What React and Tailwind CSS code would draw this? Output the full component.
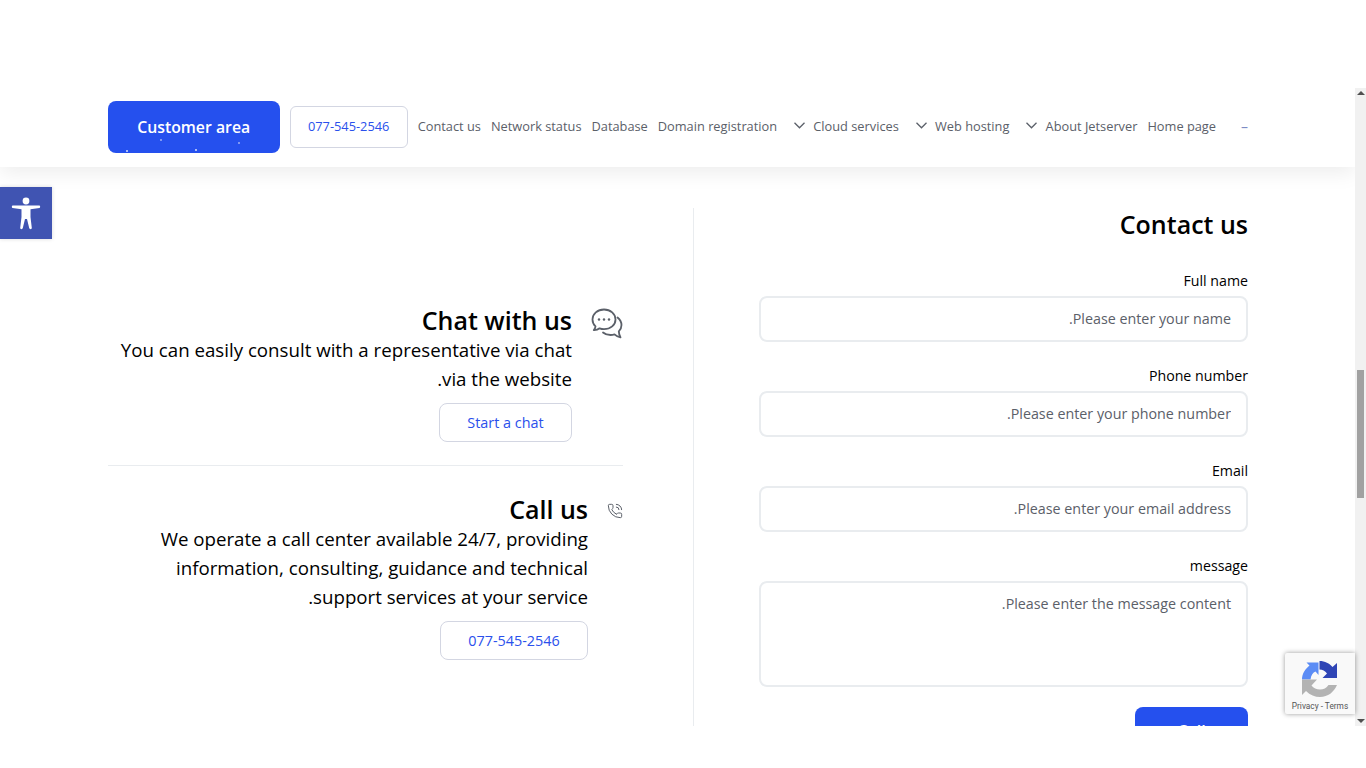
const navItems = [
  { label: "Home page" },
  { label: "About Jetserver", arrow: true },
  { label: "Web hosting", arrow: true },
  { label: "Cloud services", arrow: true },
  { label: "Domain registration" },
  { label: "Database" },
  { label: "Network status" },
  { label: "Contact us" },
];

const fields = [
  { label: "Full name", placeholder: "Please enter your name." },
  { label: "Phone number", placeholder: "Please enter your phone number." },
  { label: "Email", placeholder: "Please enter your email address." },
];

function ChatIcon() {
  return (
    <svg width="32" height="32" viewBox="0 0 32 32" fill="none" stroke="#5b6069" strokeWidth="1.8" strokeLinecap="round" strokeLinejoin="round">
      <path d="M13 1.500c-6.500 0-11.500 4.300-11.500 10 0 2.800 1.100 5.100 3 6.900-.2 1.600-.8 2.800-1.700 3.800 2.300.1 4.300-.6 5.800-1.900 1.300.5 2.800.8 4.400.8 6.500 0 11.500-4.100 11.500-9.600S19.500 1.500 13 1.500z" />
      <path d="M26.500 9.500c2.500 2 4 4.700 4 7.600 0 2.700-1 4.700-2.700 6.300.1 2.300.8 4.200 1.700 6-2.500-.5-4.500-1.600-6-3-1.200.4-2.600.6-4 .6-3 0-5.500-.8-7.500-2.500" />
      <circle cx="8" cy="11.500" r="1.200" fill="#5b6069" stroke="none" />
      <circle cx="13" cy="11.500" r="1.200" fill="#5b6069" stroke="none" />
      <circle cx="18" cy="11.500" r="1.200" fill="#5b6069" stroke="none" />
    </svg>
  );
}

function PhoneIcon() {
  return (
    <svg width="16" height="16" viewBox="0 0 24 24" fill="none" stroke="#5b6069" strokeWidth="1.500" strokeLinecap="round" strokeLinejoin="round">
      <path d="M13.800 16.600a1 1 0 0 0 1.200-.3l.4-.5a2 2 0 0 1 1.600-.8h3a2 2 0 0 1 2 2v3a2 2 0 0 1-2 2A18 18 0 0 1 2 4a2 2 0 0 1 2-2h3a2 2 0 0 1 2 2v3a2 2 0 0 1-.8 1.600l-.5.4a1 1 0 0 0-.3 1.200 14 14 0 0 0 6.400 6.400" />
      <path d="M14 2a8 8 0 0 1 8 8" />
      <path d="M14 6a4 4 0 0 1 4 4" />
    </svg>
  );
}

function Chevron() {
  return (
    <svg width="11" height="7" viewBox="0 0 11 7" fill="none" stroke="#5b6069" strokeWidth="1.300" className="mr-[8.200px] ml-[7px] -mt-[3px]">
      <path d="M.5.800l5 5 5-5" />
    </svg>
  );
}

function AccessibilityIcon() {
  return (
    <svg width="32" height="36" viewBox="0 0 32 36" fill="#fff">
      <circle cx="16" cy="6" r="3.400" />
      <path d="M2.500 10.500h27c.9 0 .9 2.400 0 2.500l-9 1.200V22l1.300 11c0 1.500-2.300 1.500-2.600 0L17 24h-2l-2.200 9c-.3 1.500-2.600 1.500-2.600 0l1.300-11v-7.800l-9-1.200c-.9-.1-.9-2.500 0-2.500z" />
    </svg>
  );
}

function RecaptchaLogo() {
  return (
    <svg width="38" height="38" viewBox="0 0 38 38" fill="none">
      <path d="M1 19.500H9.500C10 15 12 12.500 14.500 11.500L17.500 15V2.500H5.500L8.500 5.500C4 9 1 14 1 19.500z" fill="#5b8cf5" />
      <path d="M18.500 1C24 1 28.500 3.500 31.500 7L36 3V18H21.500L26 13.500C24 11 21.500 9.500 18.500 9.500z" fill="#2f45b5" />
      <path d="M1 19.500V35L5 31C9 35 14 37 19 37C27 37 33 32 36 25H27.500C25.500 28 22.500 29.500 19 29.500C15.500 29.500 12.500 28 10.500 25.500L16 19.500z" fill="#b3b3b3" />
    </svg>
  );
}

function Field({ label, children }) {
  return (
    <div className="flex flex-col">
      <label className="text-[14.200px] leading-[19px] text-black mb-[6px]">{label}</label>
      {children}
    </div>
  );
}

function Header() {
  return (
    <header className="h-[79px] shrink-0 bg-white shadow-[0_5px_20px_rgba(0,0,0,0.08)] pr-[107px] pb-[2px] flex items-center relative z-10">
      <span className="w-[8px] shrink-0 text-[14px] leading-[14px] text-[#7d8bc4] ml-[24px] mt-[1px]">–</span>
      <nav className="flex items-center shrink-0 text-[12.800px] text-[#5b6069]">
        {navItems.map((item) => (
          <a key={item.label} className="flex items-center ml-[10px] whitespace-nowrap">
            {item.label}
            {item.arrow && <Chevron />}
          </a>
        ))}
      </nav>
      <a className="w-[118px] h-[42px] shrink-0 flex items-center justify-center border border-[#d3d6e2] rounded-[6px] text-[12.800px] text-[#2a50ec] ml-[10px]">
        077-545-2546
      </a>
      <a className="relative w-[172px] h-[52px] shrink-0 pt-[2px] flex items-center justify-center rounded-[8px] bg-[#2550ee] text-white text-[15.800px] font-semibold" dir="ltr">
        Customer area
        <span className="absolute left-[52px] top-[38px] w-[2px] h-[2px] bg-[#7f97f3]" />
        <span className="absolute left-[130px] top-[41px] w-[2px] h-[2px] bg-[#7f97f3]" />
        <span className="absolute left-[18px] top-[49px] w-[2px] h-[2px] bg-[#a9baf8]" />
        <span className="absolute left-[87px] top-[48px] w-[2px] h-[2px] bg-[#a9baf8]" />
      </a>
    </header>
  );
}

function ContactForm() {
  return (
    <section className="w-[489px] shrink-0">
      <h2 className="text-[25px] leading-[32px] font-semibold text-black mb-[31px]">Contact us</h2>
      <div className="flex flex-col gap-[24px]">
        {fields.map((f) => (
          <Field key={f.label} label={f.label}>
            <input
              readOnly
              placeholder={f.placeholder}
              className="h-[46px] rounded-[8px] border-2 border-[#e9ecef] pl-[16px] pr-[15px] pb-[2px] text-[14.300px] placeholder:text-[#5b6069] outline-none"
            />
          </Field>
        ))}
        <Field label="message">
          <textarea
            readOnly
            placeholder="Please enter the message content."
            className="h-[106px] rounded-[8px] border-2 border-[#e9ecef] pl-[16px] pr-[15px] py-[10px] text-[14.300px] placeholder:text-[#5b6069] outline-none resize-none"
          />
        </Field>
      </div>
      <button className="mt-[20px] w-[113px] h-[44px] pt-[4px] bg-[#2550ee] rounded-[8px] text-white text-[16px] font-semibold">
        Call
      </button>
    </section>
  );
}

function ContactCards() {
  return (
    <section className="w-[515px] shrink-0 pt-[98px]">
      <div className="flex items-start gap-[19px] pb-[23px] border-b border-[#e9ecef]">
        <div className="mt-[2px] shrink-0"><ChatIcon /></div>
        <div className="flex-1 flex flex-col items-start">
          <h3 className="text-[25px] leading-[29px] font-semibold text-black">Chat with us</h3>
          <p className="text-[18.700px] leading-[29px] text-black">
            You can easily consult with a representative via chat via the website.
          </p>
          <a className="mt-[10px] w-[133px] h-[39px] flex items-center justify-center border border-[#d3d6e2] rounded-[8px] text-[14.400px] text-[#2a50ec]">
            Start a chat
          </a>
        </div>
      </div>
      <div className="flex items-start gap-[19px] pt-[28px]">
        <div className="shrink-0 mt-[9px] w-[16px] flex justify-center">
          <PhoneIcon />
        </div>
        <div className="flex-1 flex flex-col items-start">
          <h3 className="text-[25px] leading-[30px] font-semibold text-black">Call us</h3>
          <p className="text-[18.700px] leading-[29px] text-black">
            We operate a call center available 24/7, providing information, consulting, guidance and technical support services at your service.
          </p>
          <a className="mt-[10px] w-[148px] h-[39px] flex items-center justify-center border border-[#d3d6e2] rounded-[8px] text-[14.400px] text-[#2a50ec]">
            077-545-2546
          </a>
        </div>
      </div>
    </section>
  );
}

function Scrollbar() {
  return (
    <div className="w-[11px] shrink-0 bg-[#f1f1f1] flex flex-col items-center justify-between py-[3px]">
      <div className="w-0 h-0 border-x-[4px] border-x-transparent border-b-[4px] border-b-[#505050]" />
      <div className="absolute top-[370px] w-[7px] h-[128px] bg-[#a1a1a1]" />
      <div className="w-0 h-0 border-x-[4px] border-x-transparent border-t-[4px] border-t-[#505050]" />
    </div>
  );
}

export default function App() {
  return (
    <div className="relative w-[1366px] h-[768px] bg-white overflow-hidden font-['Open_Sans',sans-serif]" dir="rtl">
      <div className="mt-[88px] h-[638px] flex flex-row-reverse" dir="ltr">
        <Scrollbar />
        <main className="flex-1 min-w-0 flex flex-col overflow-hidden" dir="rtl">
          <Header />
          <div className="pt-[41px] pr-[107px] flex">
            <ContactForm />
            <div className="w-[1px] bg-[#e9ecef] mr-[65px] ml-[70px] h-[600px]" />
            <ContactCards />
          </div>
        </main>
      </div>

      <button className="absolute left-0 top-[187px] w-[52px] h-[52px] bg-[#4054b2] flex items-center justify-center shadow-[0_0_4px_rgba(0,0,0,0.15)]">
        <AccessibilityIcon />
      </button>

      <div className="absolute left-[1285px] top-[653px] w-[70px] h-[61px] bg-[#f9f9f9] shadow-[0_0_5px_rgba(0,0,0,0.4)] rounded-l-[2px] flex flex-col items-center" dir="ltr">
        <div className="mt-[7px] h-[38px]"><RecaptchaLogo /></div>
        <span className="text-[8.300px] leading-[10px] mt-[3px] text-[#555] font-['Roboto',sans-serif] whitespace-nowrap">Privacy - Terms</span>
      </div>
    </div>
  );
}
